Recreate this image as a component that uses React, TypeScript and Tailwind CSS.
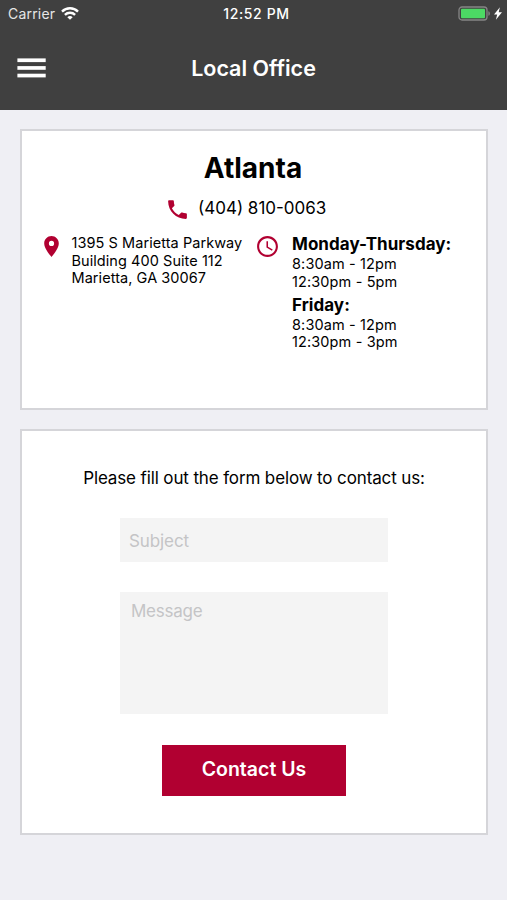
import { MdAccessTime, MdPhone, MdPlace } from "react-icons/md";

const hours = [
  { day: "Monday-Thursday:", times: ["8:30am - 12pm", "12:30pm - 5pm"] },
  { day: "Friday:", times: ["8:30am - 12pm", "12:30pm - 3pm"] },
];

function StatusBar() {
  return (
    <div className="grid h-[27px] grid-cols-3 items-center pl-2 pr-[5px] text-white">
      <div className="flex items-center gap-[6px]">
        <span className="text-[14px] leading-[17px] tracking-[0.2px] text-[#e6e6e6]">Carrier</span>
        <svg width="18" height="13" viewBox="0 0 18 13" fill="none" stroke="currentColor" strokeWidth="2.4">
          <path d="M1 4.6a11.4 11.4 0 0 1 16 0" />
          <path d="M3.9 7.8a7.3 7.3 0 0 1 10.2 0" />
          <path d="M9 12.8 6.3 10.2a3.9 3.9 0 0 1 5.4 0z" fill="currentColor" stroke="none" />
        </svg>
      </div>
      <span className="pl-[3px] text-center text-[14px] font-medium leading-[17px] tracking-[0.6px]">12:52 PM</span>
      <div className="flex items-center justify-end gap-[3px]">
        <svg width="33" height="15" viewBox="0 0 33 15">
          <rect x="1" y="1" width="28" height="13" rx="3" fill="none" stroke="#858585" strokeWidth="1.3" />
          <rect x="3" y="2.8" width="24" height="9.4" rx="1" fill="#4cd964" />
          <path d="M30.4 5.2c2 .6 2 4 0 4.6z" fill="#858585" />
        </svg>
        <svg width="8" height="13" viewBox="0 0 8 13" fill="currentColor">
          <path d="M5.9.3 0 7.4h3.2L1.9 12.7 8 5.3H4.7z" />
        </svg>
      </div>
    </div>
  );
}

function Header() {
  return (
    <header className="h-[110px] bg-[#404040]">
      <StatusBar />
      <div className="grid h-[81px] grid-cols-[46px_1fr_46px] items-center px-[17px] text-white">
        <button aria-label="Menu">
          <svg width="29" height="20" viewBox="0 0 29 20" fill="currentColor">
            <rect x="0.4" y="0.4" width="28.3" height="3.7" />
            <rect x="0.4" y="8.1" width="28.3" height="3.7" />
            <rect x="0.4" y="15.7" width="28.3" height="3.7" />
          </svg>
        </button>
        <h1 className="text-center text-[21.5px] font-semibold leading-[26px]">Local Office</h1>
      </div>
    </header>
  );
}

function OfficeCard() {
  return (
    <section className="h-[281px] border-2 border-[#d5d5d9] bg-white pt-[19px]">
      <h2 className="pr-[2px] text-center text-[28px] font-bold leading-[36px]">Atlanta</h2>
      <div className="mt-[8px] flex items-center pl-[143px]">
        <MdPhone className="mt-[3px] size-[25px] text-[#b10031]" />
        <span className="ml-[8px] text-[17px] leading-[24px]">(404) 810-0063</span>
      </div>
      <div className="mt-[12px] flex">
        <MdPlace className="ml-[17px] size-[25px] shrink-0 text-[#b10031]" />
        <address className="ml-[7.5px] w-[183.5px] shrink-0 text-[14.5px] not-italic leading-[17.6px] tracking-[0.06px]">
          1395 S Marietta Parkway
          <br />
          Building 400 Suite 112
          <br />
          Marietta, GA 30067
        </address>
        <MdAccessTime className="size-[25px] shrink-0 text-[#b10031]" />
        <div className="ml-[12px]">
          {hours.map((h) => (
            <div key={h.day} className="mb-[4.5px] text-[14.5px] leading-[17.6px] tracking-[0.12px]">
              <h3 className="text-[17px] font-bold leading-[21px] tracking-[0.05px]">{h.day}</h3>
              {h.times.map((t) => (
                <p key={t}>{t}</p>
              ))}
            </div>
          ))}
        </div>
      </div>
    </section>
  );
}

function ContactCard() {
  return (
    <section className="flex h-[406px] flex-col items-center border-2 border-[#d5d5d9] bg-white pt-[36px]">
      <p className="text-[17px] leading-[22px] tracking-[-0.13px]">Please fill out the form below to contact us:</p>
      <input
        placeholder="Subject"
        className="mt-[29px] h-[44px] w-[268px] bg-[#f4f4f4] px-[9px] pt-[2px] text-[17px] tracking-[-0.1px] placeholder:text-[#c4c4c6]"
      />
      <textarea
        placeholder="Message"
        className="mt-[30px] h-[122px] w-[268px] resize-none bg-[#f4f4f4] px-[11px] py-[8px] text-[17px] leading-[22px] tracking-[-0.25px] placeholder:text-[#c4c4c6]"
      />
      <button className="mt-[31px] h-[51px] w-[184px] bg-[#b10031] pb-[2px] text-[19.5px] font-semibold text-white">
        Contact Us
      </button>
    </section>
  );
}

export default function App() {
  return (
    <div className="h-[900px] w-[507px] overflow-hidden bg-[#efeff4] font-['Inter',sans-serif] text-black">
      <Header />
      <main className="flex flex-col gap-[19px] pl-[20px] pr-[19px] pt-[19px]">
        <OfficeCard />
        <ContactCard />
      </main>
    </div>
  );
}
